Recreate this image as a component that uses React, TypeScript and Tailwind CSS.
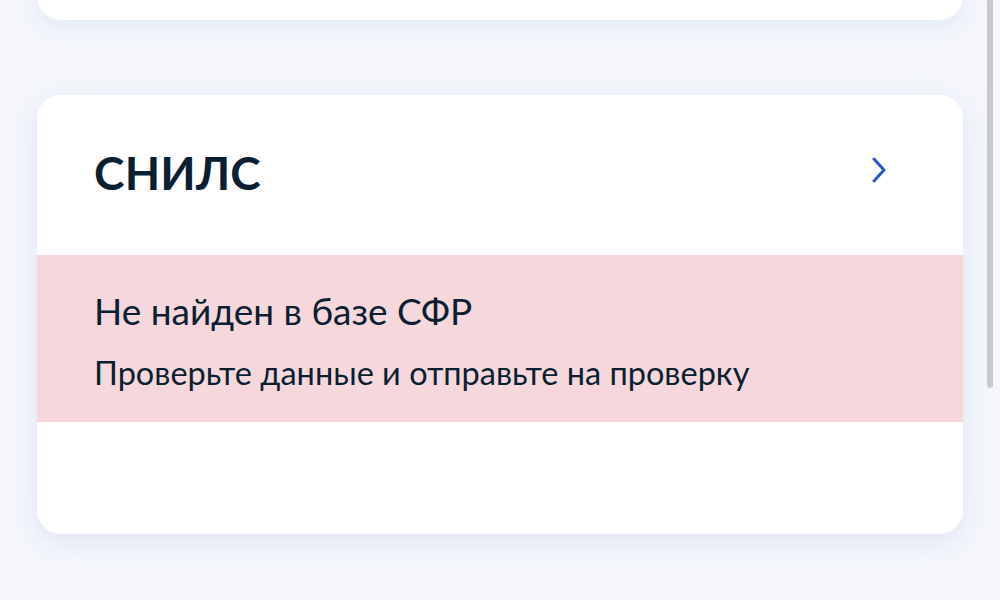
import React from "react";

export default function App() {
  return (
    <div
      className="relative w-[1000px] h-[600px] overflow-hidden bg-[#f5f7fc]"
      style={{ fontFamily: "Lato, 'Noto Sans', sans-serif" }}
    >
      <div className="flex flex-col px-[37px] pr-[37px]">
        <div className="-mt-[80px] h-[100px] rounded-[24px] bg-white shadow-[0_6px_24px_rgba(200,210,235,0.45)]" />
        <div className="mt-[75px] h-[439px] rounded-[24px] bg-white overflow-hidden shadow-[0_8px_28px_rgba(200,210,235,0.5)] flex flex-col">
          <div className="h-[160px] flex items-center justify-between pl-[57px] pr-[77px]">
            <div className="text-[46px] font-bold leading-none text-[#0b1f33] tracking-[0.2px] -mt-[4px]">
              СНИЛС
            </div>
            <svg width="14" height="26" viewBox="0 0 14 26" fill="none" className="-mt-[10px]">
              <path
                d="M2 2 L12 13 L2 24"
                stroke="#2a58c5"
                strokeWidth="3"
                strokeLinecap="round"
                strokeLinejoin="round"
              />
            </svg>
          </div>
          <div className="bg-[#f6d8dc] pl-[57px] pt-[34px] pb-[30px]">
            <div className="text-[37px] leading-[44px] text-[#0b1f33]">Не найден в базе СФР</div>
            <div className="mt-[20px] text-[32.5px] leading-[39px] text-[#0b1f33]">
              Проверьте данные и отправьте на проверку
            </div>
          </div>
        </div>
      </div>
      <div className="absolute left-[987px] top-0 w-[6px] h-[388px] rounded-b-[3px] bg-[#c9cacf]" />
    </div>
  );
}
